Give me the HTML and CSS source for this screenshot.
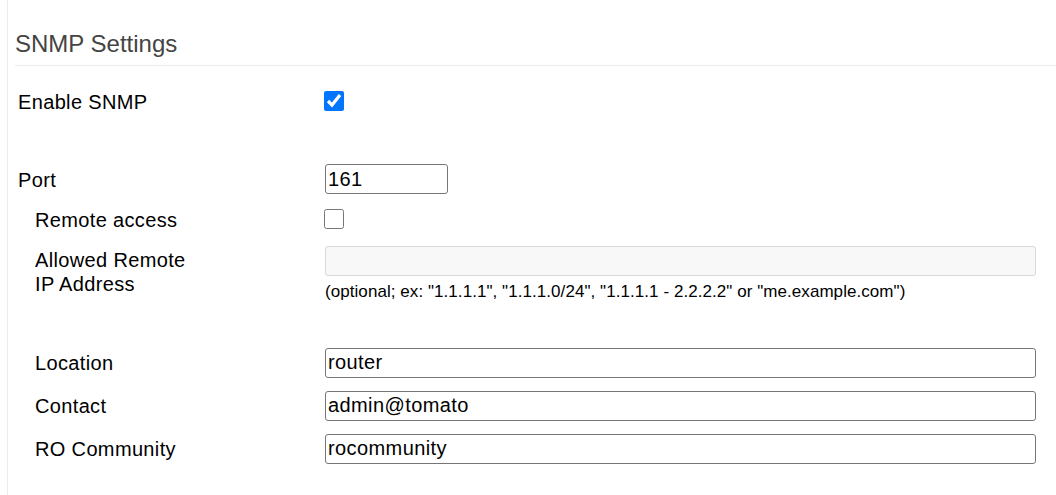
FILE: index.html
```html
<!DOCTYPE html>
<html>
<head>
<meta charset="utf-8">
<link rel="stylesheet" href="styles.css">
</head>
<body>
<div class="page">
  <div class="section">
    <h2 class="section-title">SNMP Settings</h2>
    <div class="form">
      <div class="row row-enable">
        <label class="label">Enable SNMP</label>
        <div class="field"><input type="checkbox" class="check" checked></div>
      </div>
      <div class="row row-port">
        <label class="label">Port</label>
        <div class="field"><input type="text" class="text short" value="161"></div>
      </div>
      <div class="row">
        <label class="label indent">Remote access</label>
        <div class="field"><input type="checkbox" class="check"></div>
      </div>
      <div class="row row-top">
        <label class="label indent multi">Allowed Remote<br>IP Address</label>
        <div class="field field-col">
          <input type="text" class="text long" disabled>
          <span class="hint">(optional; ex: "1.1.1.1", "1.1.1.0/24", "1.1.1.1 - 2.2.2.2" or "me.example.com")</span>
        </div>
      </div>
      <div class="row row-tall row-gap">
        <label class="label indent">Location</label>
        <div class="field"><input type="text" class="text long" value="router"></div>
      </div>
      <div class="row row-tall">
        <label class="label indent">Contact</label>
        <div class="field"><input type="text" class="text long" value="admin@tomato"></div>
      </div>
      <div class="row row-tall">
        <label class="label indent">RO Community</label>
        <div class="field"><input type="text" class="text long" value="rocommunity"></div>
      </div>
    </div>
  </div>
</div>
</body>
</html>
```

FILE: styles.css
```css
html, body {
  margin: 0;
  padding: 0;
  background: #fff;
}
body {
  font-family: "Liberation Sans", Arial, sans-serif;
  color: #000;
  width: 1056px;
  height: 495px;
  overflow: hidden;
}
.page {
  margin-left: 7px;
  border-left: 1px solid #ececec;
  padding-left: 7px;
  height: 495px;
}
.section-title {
  margin: 0;
  padding-top: 30px;
  padding-bottom: 7px;
  font-size: 24px;
  line-height: 28px;
  font-weight: normal;
  color: #444;
  border-bottom: 1px solid #ececec;
}
.form {
  display: flex;
  flex-direction: column;
  padding-top: 15px;
}
.row {
  display: flex;
  align-items: center;
  height: 40px;
}
.row-port {
  margin-top: 38px;
}
.row-top {
  align-items: flex-start;
  height: auto;
  padding-top: 7px;
}
.row-tall {
  height: 43px;
}
.row-gap {
  margin-top: 39px;
}
.label {
  width: 307px;
  padding-left: 3px;
  padding-top: 1px;
  font-size: 20px;
  line-height: 24px;
  letter-spacing: 0.35px;
  flex: none;
  box-sizing: content-box;
}
.label.indent {
  padding-left: 20px;
  width: 290px;
}
.label.multi {
  padding-top: 2px;
}
.field {
  display: flex;
  align-items: center;
}
.field-col {
  flex-direction: column;
  align-items: flex-start;
}
.check {
  width: 20px;
  height: 20px;
  margin: 0 0 0 -1px;
}
.text {
  box-sizing: border-box;
  height: 30px;
  padding: 0 2px;
  border: 1px solid #767676;
  border-radius: 3px;
  font-family: "Liberation Sans", Arial, sans-serif;
  font-size: 20px;
  letter-spacing: 0.4px;
  color: #000;
  background: #fff;
  margin: 0;
}
.text.short {
  width: 123px;
}
.text.long {
  width: 711px;
}
.text:disabled {
  background: #f8f8f8;
  border-color: #d9d9d9;
}
.hint {
  margin-top: 6px;
  font-size: 17px;
  line-height: 20px;
  letter-spacing: 0.06px;
}
```
